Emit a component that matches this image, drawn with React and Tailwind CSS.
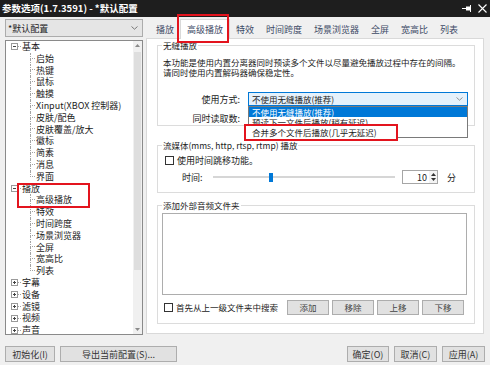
import React from "react";

const line = "border-dotted border-[#a3a3a3]";

function Expander({ open }) {
  return (
    <svg width="7" height="7" viewBox="0 0 7 7" className="shrink-0">
      <rect x="0.5" y="0.5" width="6" height="6" fill="#fff" stroke="#9a9a9a" />
      <path d="M2 3.5h3" stroke="#444" />
      {!open && <path d="M3.5 2v3" stroke="#444" />}
    </svg>
  );
}

function TopRow({ label, open }) {
  return (
    <div className="flex h-[11.8px] items-center">
      <div className="w-[5px] shrink-0" />
      <Expander open={open} />
      <div className={`w-[3px] shrink-0 border-b ${line}`} />
      <span className="ml-[1px] whitespace-nowrap">{label}</span>
    </div>
  );
}

function ChildRow({ label, last }) {
  return (
    <div className="flex h-[11.8px] items-center">
      <div className="w-[24px] shrink-0" />
      <div className="flex h-full w-[5px] shrink-0 flex-col">
        <div className={`h-1/2 border-b border-l ${line}`} />
        <div className={last ? "h-1/2" : `h-1/2 border-l ${line}`} />
      </div>
      <span className="ml-[1px] whitespace-nowrap">{label}</span>
    </div>
  );
}

function Chevron({ color = "#6b6b6b" }) {
  return (
    <svg width="7" height="4" viewBox="0 0 7 4" className="shrink-0">
      <path d="M0.5 0.5L3.5 3.2L6.5 0.5" fill="none" stroke={color} strokeWidth="0.9" />
    </svg>
  );
}

function Check() {
  return <span className="h-[9px] w-[9px] shrink-0 border border-[#333] bg-white" />;
}

function Btn({ children, w }) {
  return (
    <div className={`flex h-[15px] items-center justify-center border border-[#adadad] bg-[#e1e1e1] text-[#444] ${w}`}>
      {children}
    </div>
  );
}

function Group({ label, h, mt, children }) {
  return (
    <div className={`border border-[#dcdcdc] ${h} ${mt}`}>
      <div className="-mt-[6px] ml-[4px] w-fit bg-white px-[1px] leading-[10px]">{label}</div>
      {children}
    </div>
  );
}

const tabs = ["播放", "高级播放", "特效", "时间跨度", "场景浏览器", "全屏", "宽高比", "列表"];

export default function App() {
  return (
    <div className="relative flex h-[365px] w-[490px] flex-col overflow-hidden bg-[#f0f0f0] font-['Noto_Sans_CJK_SC',sans-serif] text-[#1b1b1b]">
      {/* 标题栏 */}
      <div className="flex h-[17px] shrink-0 items-center justify-between bg-[#1e1e1e] pl-[2px] pr-[3px] text-[9.5px] font-bold leading-none text-white">
        <span>参数选项(1.7.3591) - *默认配置</span>
        <div className="flex items-center gap-[6px]">
          <svg width="10" height="7" viewBox="0 0 10 7">
            <path d="M0 3.5h4" stroke="#fff" />
            <rect x="4" y="1.5" width="4" height="4" fill="#fff" />
            <path d="M8.5 0v7" stroke="#fff" />
          </svg>
          <svg width="9" height="9" viewBox="0 0 9 9">
            <path d="M0.5 0.5l8 8M8.5 0.5l-8 8" stroke="#fff" strokeWidth="1.1" />
          </svg>
        </div>
      </div>

      <div className="flex h-[318px] shrink-0">
        {/* 左侧：配置 + 树 */}
        <div className="ml-[5px] flex w-[138px] flex-col gap-[3px] pt-[2px] text-[9px]">
          <div className="flex h-[18px] items-center justify-between border border-[#acacac] bg-[#e5e5e5] pl-[2px] pr-[4px] leading-none">
            <span>*默认配置</span>
            <Chevron />
          </div>
          <div className="flex h-[295px] overflow-hidden border border-[#8a8a8a] bg-white leading-[11.8px]">
            <div className="flex-1 overflow-hidden">
              <TopRow label="基本" open />
              {["启始", "热键", "鼠标", "触摸", "Xinput(XBOX 控制器)", "皮肤/配色", "皮肤覆盖/放大", "徽标", "简素", "消息"].map((l) => (
                <ChildRow key={l} label={l} />
              ))}
              <ChildRow label="界面" last />
              <div className="relative">
                <TopRow label="播放" open />
                <ChildRow label="高级播放" />
                <span className="absolute -bottom-[2px] left-[11px] top-0 w-[73px] border-2 border-[#e3141e]" />
              </div>
              {["特效", "时间跨度", "场景浏览器", "全屏", "宽高比"].map((l) => (
                <ChildRow key={l} label={l} />
              ))}
              <ChildRow label="列表" last />
              {["字幕", "设备", "滤镜", "视频", "声音"].map((l) => (
                <TopRow key={l} label={l} />
              ))}
            </div>
            <div className="flex w-[9px] shrink-0 flex-col bg-[#f0f0f0]">
              <div className="flex h-[9px] items-center justify-center">
                <svg width="5" height="3" viewBox="0 0 5 3"><path d="M0 3L2.5 0L5 3z" fill="#8a8a8a" /></svg>
              </div>
              <div className="flex-1 px-[1px] pt-[2px]">
                <div className="h-[218px] bg-[#dedede]" />
              </div>
              <div className="flex h-[9px] items-center justify-center">
                <svg width="5" height="3" viewBox="0 0 5 3"><path d="M0 0L2.5 3L5 0z" fill="#8a8a8a" /></svg>
              </div>
            </div>
          </div>
        </div>

        {/* 右侧：选项卡 + 面板 */}
        <div className="ml-[3px] flex w-[338px] flex-col">
          <div className="relative flex h-[21px] shrink-0 items-end pl-[4px] text-[9px] leading-none text-[#3d4a66]">
            {tabs.map((t, i) =>
              i === 1 ? (
                <div key={t} className="-mb-px flex h-[20px] items-center border border-b-0 border-[#d9d9d9] bg-white px-[6px]">
                  {t}
                </div>
              ) : (
                <div key={t} className="flex h-[18px] items-center px-[6px]">
                  {t}
                </div>
              )
            )}
            <span className="absolute -top-[3px] left-[31px] h-[29px] w-[52px] border-2 border-[#e3141e]" />
          </div>

          <div className="h-[296px] shrink-0 border border-[#d9d9d9] bg-white pl-[10px] pr-[8px] text-[8.5px] text-[#222]">
            <Group label="无缝播放" h="h-[81px]" mt="mt-[6px]">
              <p className="mt-[7px] pl-[5px] leading-[10px]">
                本功能是使用内置分离器同时预读多个文件以尽量避免播放过程中存在的间隔。
                <br />
                请同时使用内置解码器确保稳定性。
              </p>
              <div className="mt-[15px] flex h-[14px] items-center">
                <span className="w-[82px] text-right text-[9px] leading-none">使用方式:</span>
                <div className="relative z-10 ml-[8px] w-[220px]">
                  <div className="flex h-[14px] items-center justify-between border border-[#0078d7] bg-[#e5f1fb] pl-[3px] pr-[4px] leading-none">
                    <span>不使用无缝播放(推荐)</span>
                    <Chevron color="#888" />
                  </div>
                  <div className="absolute left-0 top-full w-full border border-[#7a7a7a] bg-white leading-[10px]">
                    <div className="h-[10px] bg-[#0078d7] pl-[3px] text-white">不使用无缝播放(推荐)</div>
                    <div className="h-[10px] pl-[3px]">预读下一文件后播放(稍有延迟)</div>
                    <div className="h-[10px] pl-[3px]">合并多个文件后播放(几乎无延迟)</div>
                    <div className="absolute left-[-5px] top-[17px] flex h-[17px] w-[154px] items-center border-2 border-[#e3141e] bg-white pl-[6px] leading-none">
                      合并多个文件后播放(几乎无延迟)
                    </div>
                  </div>
                </div>
              </div>
              <div className="mt-[7px] flex h-[10px] items-center">
                <span className="w-[82px] text-right text-[9px] leading-none">同时读取数:</span>
              </div>
            </Group>

            <Group label="流媒体(mms, http, rtsp, rtmp) 播放" h="h-[48px]" mt="mt-[19px]">
              <div className="mt-[5px] flex h-[10px] items-center gap-[3px] pl-[7px] text-[9px] leading-none">
                <Check />
                <span>使用时间跳移功能。</span>
              </div>
              <div className="mt-[5px] flex h-[14px] items-center pl-[24px] text-[9px] leading-none">
                <span className="w-[31px]">时间:</span>
                <div className="flex h-[10px] w-[182px] items-center">
                  <div className="h-[2px] w-[56px] bg-[#d6d6d6]" />
                  <div className="h-[9px] w-[4px] bg-[#0078d7]" />
                  <div className="h-[2px] flex-1 bg-[#d6d6d6]" />
                </div>
                <div className="ml-[7px] flex h-[14px] w-[36px] items-center border border-[#a6a6a6] bg-white">
                  <span className="flex-1 pr-[2px] text-right">10</span>
                  <div className="flex h-full w-[8px] flex-col items-center justify-center gap-[2px] bg-[#f4f4f4]">
                    <svg width="5" height="3" viewBox="0 0 5 3"><path d="M0 3L2.5 0L5 3z" fill="#333" /></svg>
                    <svg width="5" height="3" viewBox="0 0 5 3"><path d="M0 0L2.5 3L5 0z" fill="#333" /></svg>
                  </div>
                </div>
                <span className="ml-[9px]">分</span>
              </div>
            </Group>

            <Group label="添加外部音频文件夹" h="h-[119px]" mt="mt-[12px]">
              <div className="ml-[4px] mt-[3px] h-[82px] w-[305px] border border-[#adadad] bg-white" />
              <div className="mt-[5px] flex h-[15px] items-center pl-[6px] leading-none">
                <Check />
                <span className="ml-[3px] w-[111px]">首先从上一级文件夹中搜索</span>
                <div className="flex gap-[3px]">
                  <Btn w="w-[42px]">添加</Btn>
                  <Btn w="w-[42px]">移除</Btn>
                  <Btn w="w-[42px]">上移</Btn>
                  <Btn w="w-[42px]">下移</Btn>
                </div>
              </div>
            </Group>
          </div>
        </div>
      </div>

      {/* 底部按钮 */}
      <div className="mt-[11px] flex h-[16px] items-center gap-[5px] px-[5px] text-[9px] leading-none">
        <div className="flex h-[16px] w-[50px] items-center justify-center border border-[#adadad] bg-[#e1e1e1] text-[#333]">初始化(I)</div>
        <div className="flex h-[16px] w-[117px] items-center justify-center border border-[#adadad] bg-[#e1e1e1] text-[#333]">导出当前配置(S)...</div>
        <div className="ml-auto flex h-[16px] w-[42px] items-center justify-center border border-[#adadad] bg-[#e1e1e1] text-[#333]">确定(O)</div>
        <div className="flex h-[16px] w-[43px] items-center justify-center border border-[#adadad] bg-[#e1e1e1] text-[#333]">取消(C)</div>
        <div className="flex h-[16px] w-[43px] items-center justify-center border border-[#adadad] bg-[#e1e1e1] text-[#333]">应用(A)</div>
      </div>
    </div>
  );
}
